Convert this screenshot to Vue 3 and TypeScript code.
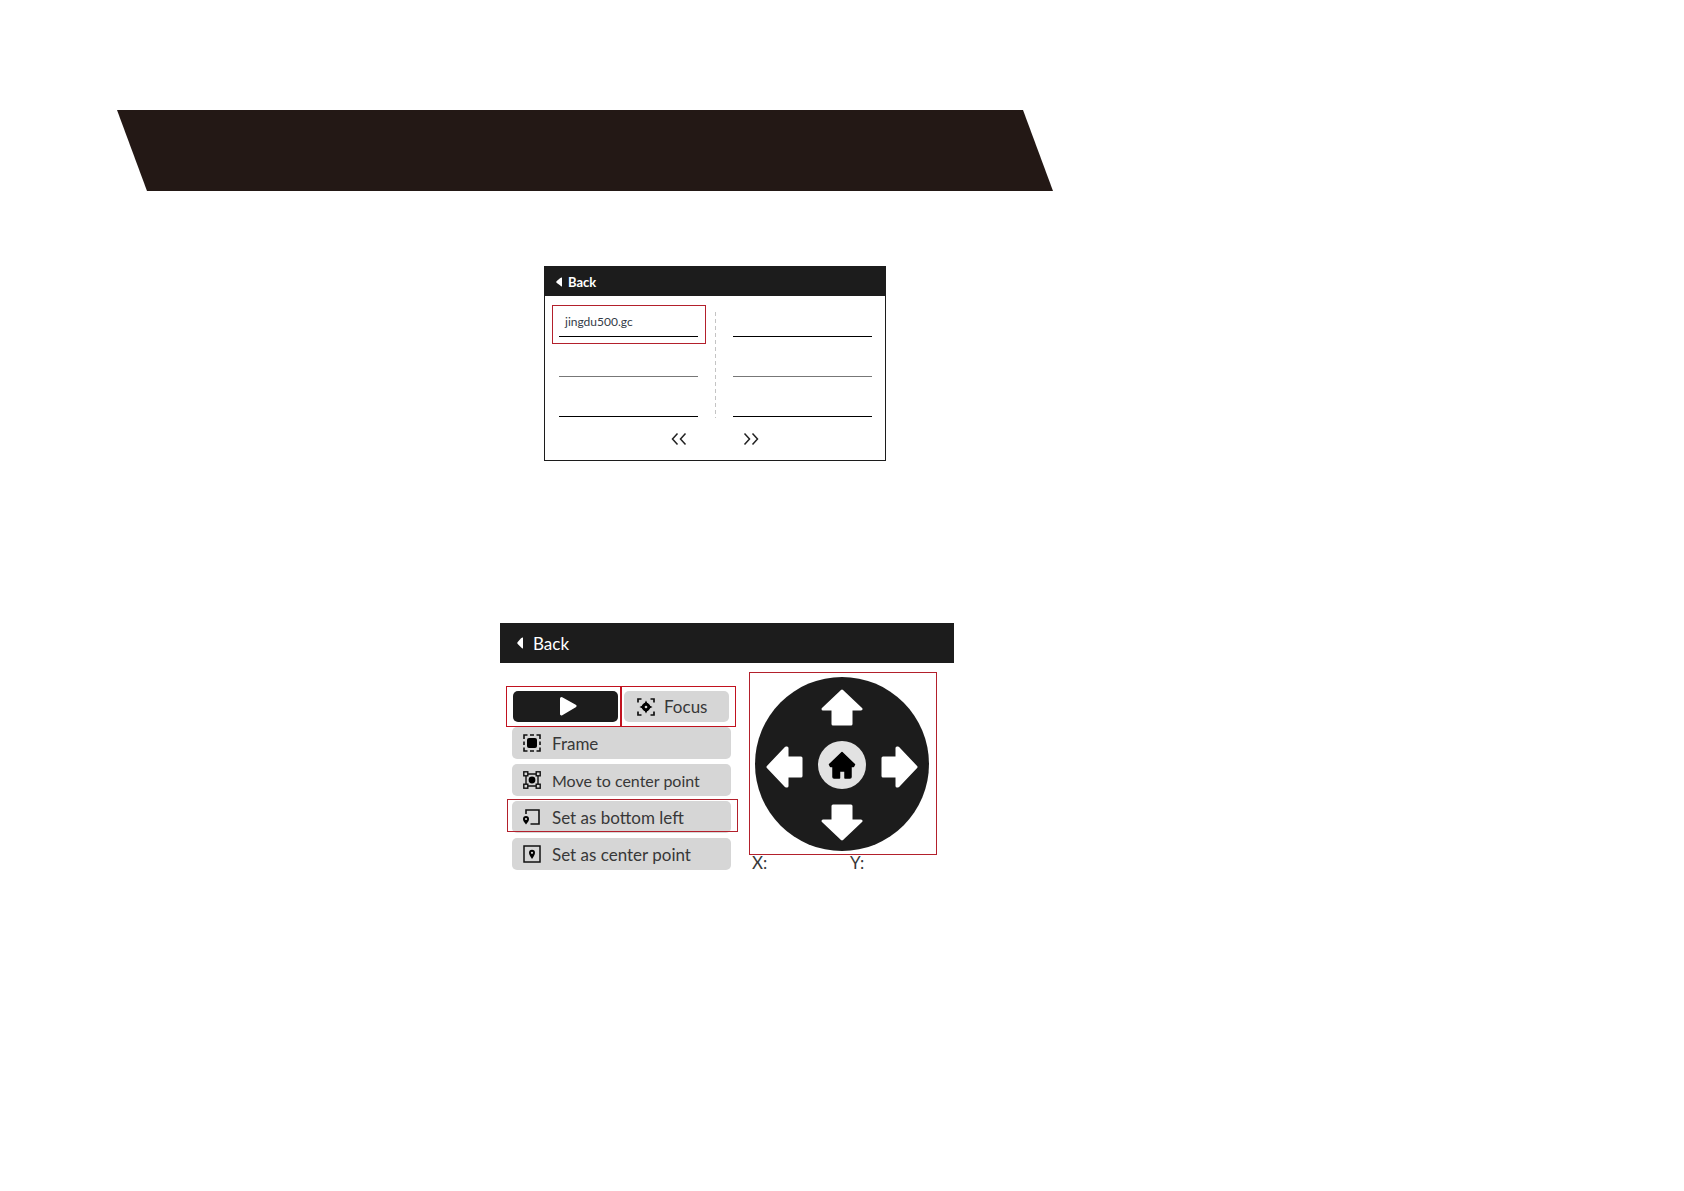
<script setup lang="ts">
import { ref } from 'vue'

interface Action {
  id: string
  label: string
  marked?: boolean
  long?: boolean
}

const actions: Action[] = [
  { id: 'frame', label: 'Frame' },
  { id: 'center', label: 'Move to center point', long: true },
  { id: 'set-left', label: 'Set as bottom left', marked: true },
  { id: 'set-center', label: 'Set as center point' },
]

const leftFiles = ['jingdu500.gc', '', '']
const rightFiles = ['', '', '']

const directions = [
  { id: 'up', label: 'Move up', box: '0 0 42 37', points: '21,2 40,20 30,20 30,35 12,35 12,20 2,20' },
  { id: 'left', label: 'Move left', box: '0 0 37 46', points: '2,25 20,6 21,6 21,16 35,16 35,34 21,34 21,44 20,44' },
  { id: 'right', label: 'Move right', box: '0 0 37 46', points: '35,25 17,6 16,6 16,16 2,16 2,34 16,34 16,44 17,44' },
  { id: 'down', label: 'Move down', box: '0 0 42 37', points: '21,35 40,17 30,17 30,2 12,2 12,17 2,17' },
]

const selected = ref('jingdu500.gc')
</script>

<template>
  <main class="page">
    <div class="banner"></div>

    <section class="files" aria-label="Files">
      <header class="bar bar-small">
        <button type="button" class="back">
          <svg width="6" height="10" viewBox="0 0 6 10" aria-hidden="true"><path d="M6 0.500v9Q5 9.500 4 8.300L0.500 5.700Q0 5 0.500 4.300L4 1.200Q5 .4 6 .5z" fill="#fff" /></svg>
          <span>Back</span>
        </button>
      </header>
      <div class="file-grid">
        <ul class="file-list">
          <li v-for="(name, i) in leftFiles" :key="i" :class="{ chosen: name && name === selected }">
            <button v-if="name" type="button" class="file" @click="selected = name">{{ name }}</button>
          </li>
        </ul>
        <div class="divider"></div>
        <ul class="file-list">
          <li v-for="(name, i) in rightFiles" :key="i">{{ name }}</li>
        </ul>
      </div>
      <nav class="pager" aria-label="Pages">
        <button type="button" aria-label="Previous page">
          <svg width="16" height="12" viewBox="0 0 16 12"><path d="M6.500 .5L1.500 6l5 5.500M14.500 .5L9.500 6l5 5.500" /></svg>
        </button>
        <button type="button" aria-label="Next page">
          <svg width="16" height="12" viewBox="0 0 16 12"><path d="M1.500 .5L6.500 6l-5 5.500M9.500 .5L14.500 6l-5 5.500" /></svg>
        </button>
      </nav>
    </section>

    <section class="control" aria-label="Control">
      <header class="bar bar-large">
        <button type="button" class="back">
          <svg width="6" height="12" viewBox="0 0 6 12" aria-hidden="true"><path d="M6 0.500v11Q5 11.500 4 10.300L0.500 6.700Q0 6 .5 5.300L4 1.200Q5 .4 6 .5z" fill="#fff" /></svg>
          <span>Back</span>
        </button>
      </header>
      <div class="control-body">
        <div class="actions">
          <div class="top-row">
            <div class="mark">
              <button type="button" class="action play" aria-label="Start">
                <svg width="22" height="22" viewBox="0 0 22 22"><path d="M6.500 2.500L20 10L6.500 18z" fill="#fff" stroke="#fff" stroke-width="3" stroke-linejoin="round" /></svg>
              </button>
            </div>
            <div class="mark">
              <button type="button" class="action focus">
                <svg width="18" height="18" viewBox="0 0 18 18" aria-hidden="true">
                  <path d="M1 4.500V1h3.500M13.500 1H17v3.500M17 13.500V17h-3.500M4.500 17H1v-3.500" fill="none" stroke="#111" stroke-width="1.700" />
                  <path d="M9 2.500L10.500 5.500L12.500 7.500L15.500 9L12.500 10.500L10.500 12.500L9 15.500L7.500 12.500L5.500 10.500L2.500 9L5.500 7.500L7.500 5.500z" fill="#000" />
                  <circle cx="9" cy="9" r="4.200" fill="#000" />
                  <circle cx="9" cy="9" r="1.300" fill="#d6d6d6" />
                </svg>
                <span>Focus</span>
              </button>
            </div>
          </div>
          <button v-for="a in actions" :key="a.id" type="button" class="action wide" :class="{ marked: a.marked, long: a.long }">
            <svg v-if="a.id === 'frame'" width="18" height="18" viewBox="0 0 18 18" aria-hidden="true">
              <path d="M1 5V1h3.500M7 1h4M13.500 1H17v4M17 7.500v3.500M17 13.500V17h-3.500M11 17H7M4.500 17H1v-3.500M1 11V7.500" fill="none" stroke="#111" stroke-width="1.600" />
              <rect x="4" y="4" width="10" height="10" rx="2" fill="#000" />
            </svg>
            <svg v-else-if="a.id === 'center'" width="18" height="18" viewBox="0 0 18 18" aria-hidden="true">
              <g fill="none" stroke="#111" stroke-width="1.400">
                <path d="M5 3h8M5 15h8M3 5v8M15 5v8" />
                <rect x=".8" y=".8" width="4" height="4" /><rect x="13.200" y=".8" width="4" height="4" />
                <rect x=".8" y="13.200" width="4" height="4" /><rect x="13.200" y="13.200" width="4" height="4" />
              </g>
              <circle cx="9" cy="9" r="3.400" fill="#000" />
            </svg>
            <svg v-else-if="a.id === 'set-left'" width="18" height="18" viewBox="0 0 18 18" aria-hidden="true">
              <path d="M3 6V2h13v14H7.500" fill="none" stroke="#111" stroke-width="1.600" />
              <path d="M3 16.500C1 14 0 12.500 0 11a3 3 0 0 1 6 0C6 12.500 5 14 3 16.500z" fill="#000" />
              <circle cx="3" cy="11" r="1.100" fill="#d6d6d6" />
            </svg>
            <svg v-else width="18" height="18" viewBox="0 0 18 18" aria-hidden="true">
              <rect x="1" y="1" width="16" height="16" fill="none" stroke="#111" stroke-width="1.500" />
              <path d="M9 14C7 11 6 9.500 6 7.800a3 3 0 0 1 6 0C12 9.500 11 11 9 14z" fill="#000" />
              <circle cx="9" cy="7.800" r="1.100" fill="#d6d6d6" />
            </svg>
            <span>{{ a.label }}</span>
          </button>
        </div>

        <div class="motion">
          <div class="pad-frame">
            <div class="pad">
              <button v-for="d in directions" :key="d.id" type="button" :class="d.id" :aria-label="d.label">
                <svg :viewBox="d.box" :class="d.id === 'up' || d.id === 'down' ? 'tall' : 'flat'">
                  <polygon :points="d.points" fill="#fff" stroke="#fff" stroke-width="3" stroke-linejoin="round" />
                </svg>
              </button>
              <button type="button" class="home" aria-label="Home">
                <svg width="28" height="28" viewBox="0 0 28 28">
                  <path d="M14 1.500L26.500 13.500L25.500 15.500H23V26Q23 27 22 27H17V20H11.500V27H6Q5 27 5 26V15.500H2.500L1.500 13.500z" fill="#000" stroke="#000" stroke-width="1.500" stroke-linejoin="round" />
                </svg>
              </button>
            </div>
          </div>
          <div class="coords"><span>X:</span><span>Y:</span></div>
        </div>
      </div>
    </section>
  </main>
</template>

<style>
body {
  margin: 0;
  background: #fff;
}
</style>

<style scoped>
.page {
  display: flex;
  flex-direction: column;
  align-items: flex-start;
  padding: 110px 117px;
  font-family: Lato, "Noto Sans", sans-serif;
  color: #383838;
}

button {
  margin: 0;
  padding: 0;
  border: 0;
  background: none;
  font: inherit;
  color: inherit;
  cursor: pointer;
}

svg {
  display: block;
  flex: none;
}

.banner {
  width: 100%;
  max-width: 936px;
  height: 81px;
  background: #231815;
  clip-path: polygon(0 0, calc(100% - 30px) 0, 100% 100%, 30px 100%);
}

.bar {
  display: flex;
  align-items: center;
  background: #1c1c1c;
  color: #fff;
}

.back {
  display: flex;
  align-items: center;
}

.files {
  box-sizing: border-box;
  width: 342px;
  margin: 75px 0 0 427px;
  border: 1px solid #1c1c1c;
}

.bar-small {
  height: 29px;
  padding-left: 11px;
  font-size: 13px;
  font-weight: 700;
}

.bar-small .back {
  gap: 6px;
}

.file-grid {
  display: grid;
  grid-template-columns: 1fr 1px 1fr;
  gap: 17px;
  padding: 1px 13px 0 14px;
}

.file-list {
  margin: 0;
  padding: 0;
  list-style: none;
}

.file-list li {
  box-sizing: border-box;
  position: relative;
  height: 40px;
  border-bottom: 1px solid #000;
}

.file-list li:nth-child(2) {
  border-color: #777;
}

.file-list .chosen::after {
  content: "";
  position: absolute;
  inset: 8px -8px -8px -7px;
  border: 1px solid #b3202c;
  pointer-events: none;
}

.file {
  width: 100%;
  height: 39px;
  padding: 10px 0 0 6px;
  font-size: 12px;
  line-height: 16px;
  text-align: left;
  color: #333b48;
}

.divider {
  height: 106px;
  margin-top: 15px;
  background: repeating-linear-gradient(#c4c4c4 0 4px, transparent 4px 7px);
}

.pager {
  display: flex;
  justify-content: center;
  gap: 56px;
  padding: 15px 0;
}

.pager path {
  fill: none;
  stroke: #222;
  stroke-width: 1.5;
}

.control {
  width: 454px;
  margin: 162px 0 0 383px;
}

.bar-large {
  height: 40px;
  padding-left: 17px;
  font-size: 17px;
}

.bar-large .back {
  gap: 10px;
}

.control-body {
  display: flex;
  justify-content: space-between;
  padding: 9px 17px 0 6px;
}

.actions {
  display: flex;
  flex-direction: column;
  align-items: flex-start;
  gap: 5px;
  padding-top: 14px;
  font-size: 17px;
}

.top-row {
  display: flex;
  margin-bottom: -5px;
}

.mark {
  box-sizing: border-box;
  width: 116px;
  height: 41px;
  padding: 4px 3px 4px 6px;
  border: 1px solid #c1121f;
}

.mark + .mark {
  margin-left: -2px;
  padding: 4px 6px 4px 3px;
}

.action {
  display: flex;
  align-items: center;
  width: 100%;
  height: 100%;
  border-radius: 5px;
  background: #d6d6d6;
}

.play {
  justify-content: center;
  background: #1c1c1c;
}

.focus {
  gap: 9px;
  padding-left: 13px;
}

.wide {
  position: relative;
  width: 219px;
  height: 32px;
  margin-left: 6px;
  padding-left: 11px;
  gap: 11px;
}

.long {
  font-size: 16px;
}

.marked::after {
  content: "";
  position: absolute;
  inset: -2px -7px 1px -5px;
  border: 1px solid #b3202c;
}

.pad-frame {
  box-sizing: border-box;
  width: 188px;
  height: 183px;
  padding: 4px 5px;
  border: 1px solid #b3202c;
}

.pad {
  box-sizing: border-box;
  display: grid;
  grid-template-columns: 37px 48px 37px;
  grid-template-rows: 37px 48px 37px;
  gap: 15px;
  width: 174px;
  height: 174px;
  padding: 12px 11px;
  place-items: center;
  border-radius: 50%;
  background: #1c1c1c;
}

.tall {
  width: 42px;
  height: 37px;
}

.flat {
  width: 37px;
  height: 46px;
}

.up {
  grid-area: 1 / 2;
}

.left {
  grid-area: 2 / 1;
}

.right {
  grid-area: 2 / 3;
}

.down {
  grid-area: 3 / 2;
}

.home {
  grid-area: 2 / 2;
  display: grid;
  place-items: center;
  width: 48px;
  height: 48px;
  border-radius: 50%;
  background: #e2e2e2;
}

.coords {
  display: grid;
  grid-template-columns: 98px 1fr;
  padding-left: 3px;
  font-size: 17px;
  line-height: 16px;
}
</style>
